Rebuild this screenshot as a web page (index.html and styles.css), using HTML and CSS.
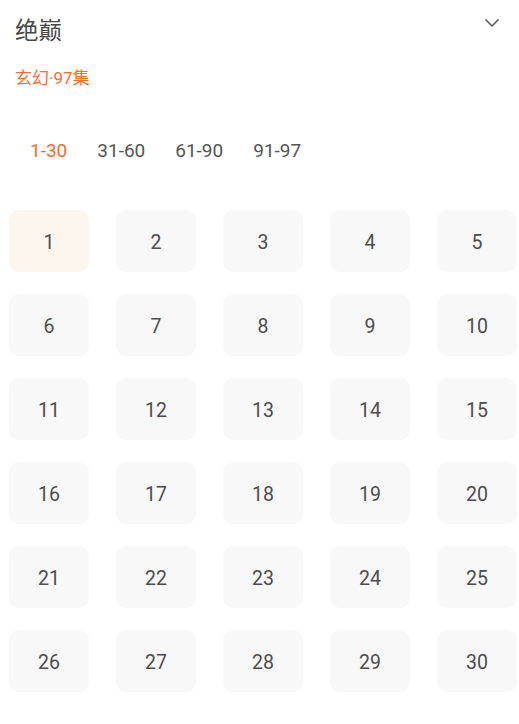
FILE: index.html
```html
<!DOCTYPE html>
<html lang="zh">
  <head>
    <meta charset="UTF-8" />
    <meta name="viewport" content="width=device-width, initial-scale=1.0" />
    <title>绝巅</title>
    <link rel="stylesheet" href="styles.css">
  </head>

  <body>
    <div class="panel">
      <div class="header">
        <h1 class="title">绝巅</h1>
        <svg class="toggle" width="16" height="10" viewBox="0 0 16 10">
          <path d="M1.5 1.5 L8 8 L14.5 1.5" fill="none" stroke="#555" stroke-width="1.5" />
        </svg>
      </div>
      <div class="meta">玄幻·97集</div>
      <div class="tabs">
        <span class="tab active">1-30</span>
        <span class="tab">31-60</span>
        <span class="tab">61-90</span>
        <span class="tab">91-97</span>
      </div>
      <div class="grid">
        <div class="ep current">1</div>
        <div class="ep">2</div>
        <div class="ep">3</div>
        <div class="ep">4</div>
        <div class="ep">5</div>
        <div class="ep">6</div>
        <div class="ep">7</div>
        <div class="ep">8</div>
        <div class="ep">9</div>
        <div class="ep">10</div>
        <div class="ep">11</div>
        <div class="ep">12</div>
        <div class="ep">13</div>
        <div class="ep">14</div>
        <div class="ep">15</div>
        <div class="ep">16</div>
        <div class="ep">17</div>
        <div class="ep">18</div>
        <div class="ep">19</div>
        <div class="ep">20</div>
        <div class="ep">21</div>
        <div class="ep">22</div>
        <div class="ep">23</div>
        <div class="ep">24</div>
        <div class="ep">25</div>
        <div class="ep">26</div>
        <div class="ep">27</div>
        <div class="ep">28</div>
        <div class="ep">29</div>
        <div class="ep">30</div>
      </div>
    </div>
  </body>
</html>
```

FILE: styles.css
```css
* {
  padding: 0;
  margin: 0;
  box-sizing: border-box;
}

body {
  background-color: #fff;
  font-family: Roboto, "Noto Sans CJK SC", sans-serif;
  color: #333;
}

.panel {
  width: 519px;
}

.header {
  height: 58px;
  padding: 0 19px 0 15px;
  display: flex;
  justify-content: space-between;
  align-items: flex-start;
}

.title {
  font-family: "Noto Sans CJK SC", sans-serif;
  font-weight: 400;
  font-size: 23.5px;
  line-height: 58px;
  color: #484848;
}

.toggle {
  margin-top: 18px;
}

.meta {
  margin-top: 10px;
  padding-left: 15px;
  font-family: Roboto, "Noto Sans CJK SC", sans-serif;
  font-size: 17px;
  line-height: 20px;
  color: #fa6d2a;
}

.tabs {
  margin-top: 51px;
  padding-left: 15px;
  display: flex;
  height: 24px;
}

.tab {
  padding: 0 15px;
  font-size: 19px;
  line-height: 24px;
  color: #555;
}

.tab.active {
  color: #fa6d2a;
}

.grid {
  margin-top: 47px;
  padding-left: 9px;
  display: grid;
  grid-template-columns: repeat(5, 80px);
  grid-auto-rows: 62px;
  column-gap: 27px;
  row-gap: 22px;
}

.ep {
  display: flex;
  justify-content: center;
  align-items: center;
  padding-top: 3px;
  background-color: #f8f8f8;
  border-radius: 10px;
  font-size: 19.5px;
  color: #4d4d4d;
}

.ep.current {
  background-color: #fdf6ef;
}
```
